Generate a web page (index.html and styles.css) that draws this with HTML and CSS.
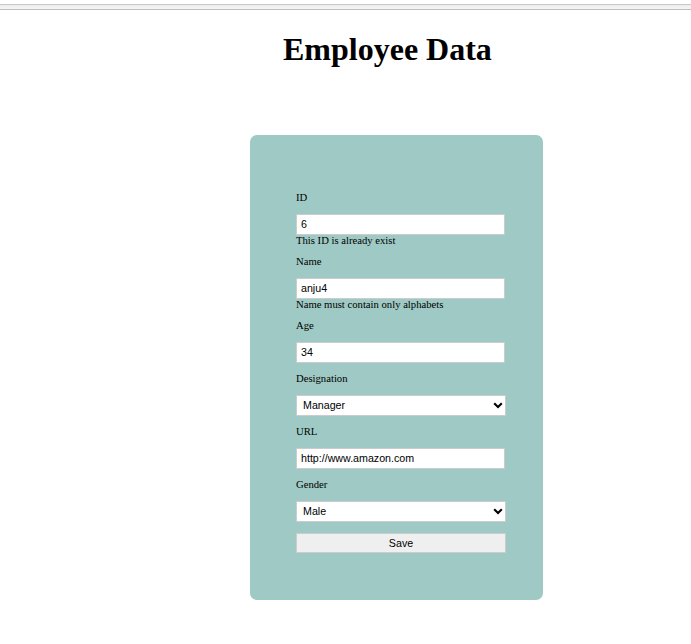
FILE: index.html
```html
<!DOCTYPE html>
<html lang="en">
<head>
<meta charset="utf-8">
<title>Employee Data</title>
<link rel="stylesheet" href="styles.css">
</head>
<body>
<div class="topbar"></div>
<h1 class="title">Employee Data</h1>
<form class="card">
  <div class="field"><label class="label" for="id">ID</label><input class="input" id="id" value="6"><p class="error">This ID is already exist</p></div>
  <div class="field"><label class="label" for="name">Name</label><input class="input" id="name" value="anju4"><p class="error">Name must contain only alphabets</p></div>
  <div class="field"><label class="label" for="age">Age</label><input class="input" id="age" value="34"></div>
  <div class="field"><label class="label" for="designation">Designation</label><div class="select-wrap"><select class="select" id="designation"><option>Manager</option></select><svg class="chevron" viewBox="0 0 10 7"><path d="M1.2 1.3 5 5 8.8 1.3"/></svg></div></div>
  <div class="field"><label class="label" for="url">URL</label><input class="input" id="url" value="http://www.amazon.com"></div>
  <div class="field"><label class="label" for="gender">Gender</label><div class="select-wrap"><select class="select" id="gender"><option>Male</option></select><svg class="chevron" viewBox="0 0 10 7"><path d="M1.2 1.3 5 5 8.8 1.3"/></svg></div></div>
  <button class="save" type="button">Save</button>
</form>
</body>
</html>
```
FILE: styles.css
```css
* { box-sizing: border-box; }
body {
  display: flow-root;
  margin: 0;
  height: 644px;
  overflow: hidden;
  background: #fff;
  color: #000;
  font-family: "Liberation Serif", "Times New Roman", serif;
}
.topbar {
  height: 6px;
  margin-top: 4px;
  border-top: 1px solid #c8c8c8;
  border-bottom: 1px solid #bdbdbd;
  background: linear-gradient(#ececec, #f6f6f6);
}
.title {
  margin: 21px 0 0 283px;
  font-size: 32px;
  line-height: 37px;
}
.card {
  width: 293px;
  height: 465px;
  margin: 67px 0 0 250px;
  padding: 56px 37px 0 46px;
  border-radius: 7px;
  background: #9fc9c4;
}
.field { margin-bottom: 9px; }
.label {
  display: block;
  height: 13px;
  margin-bottom: 10px;
  font-size: 10.67px;
  line-height: 13px;
}
.input, .select {
  display: block;
  width: 209px;
  height: 21px;
  margin: 0;
  padding: 0 4px 1px;
  border: 1px solid #ccc;
  border-radius: 0;
  background: #fff;
  color: #000;
  font: 10.67px "Liberation Sans", Arial, sans-serif;
}
.select-wrap {
  position: relative;
  width: 210px;
}
.select {
  width: 210px;
  padding: 0 16px 1px 6px;
  appearance: none;
}
.chevron {
  position: absolute;
  top: 7px;
  right: 3px;
  width: 10px;
  height: 7px;
  fill: none;
  stroke: #000;
  stroke-width: 2.1;
  pointer-events: none;
}
.error {
  height: 11px;
  margin: 0;
  font-size: 10.67px;
  line-height: 11px;
}
.save {
  display: block;
  width: 210px;
  height: 20px;
  margin-top: 11px;
  padding: 0;
  border: 1px solid #ccc;
  background: #efefef;
  color: #000;
  font: 10.67px "Liberation Sans", Arial, sans-serif;
}
```
